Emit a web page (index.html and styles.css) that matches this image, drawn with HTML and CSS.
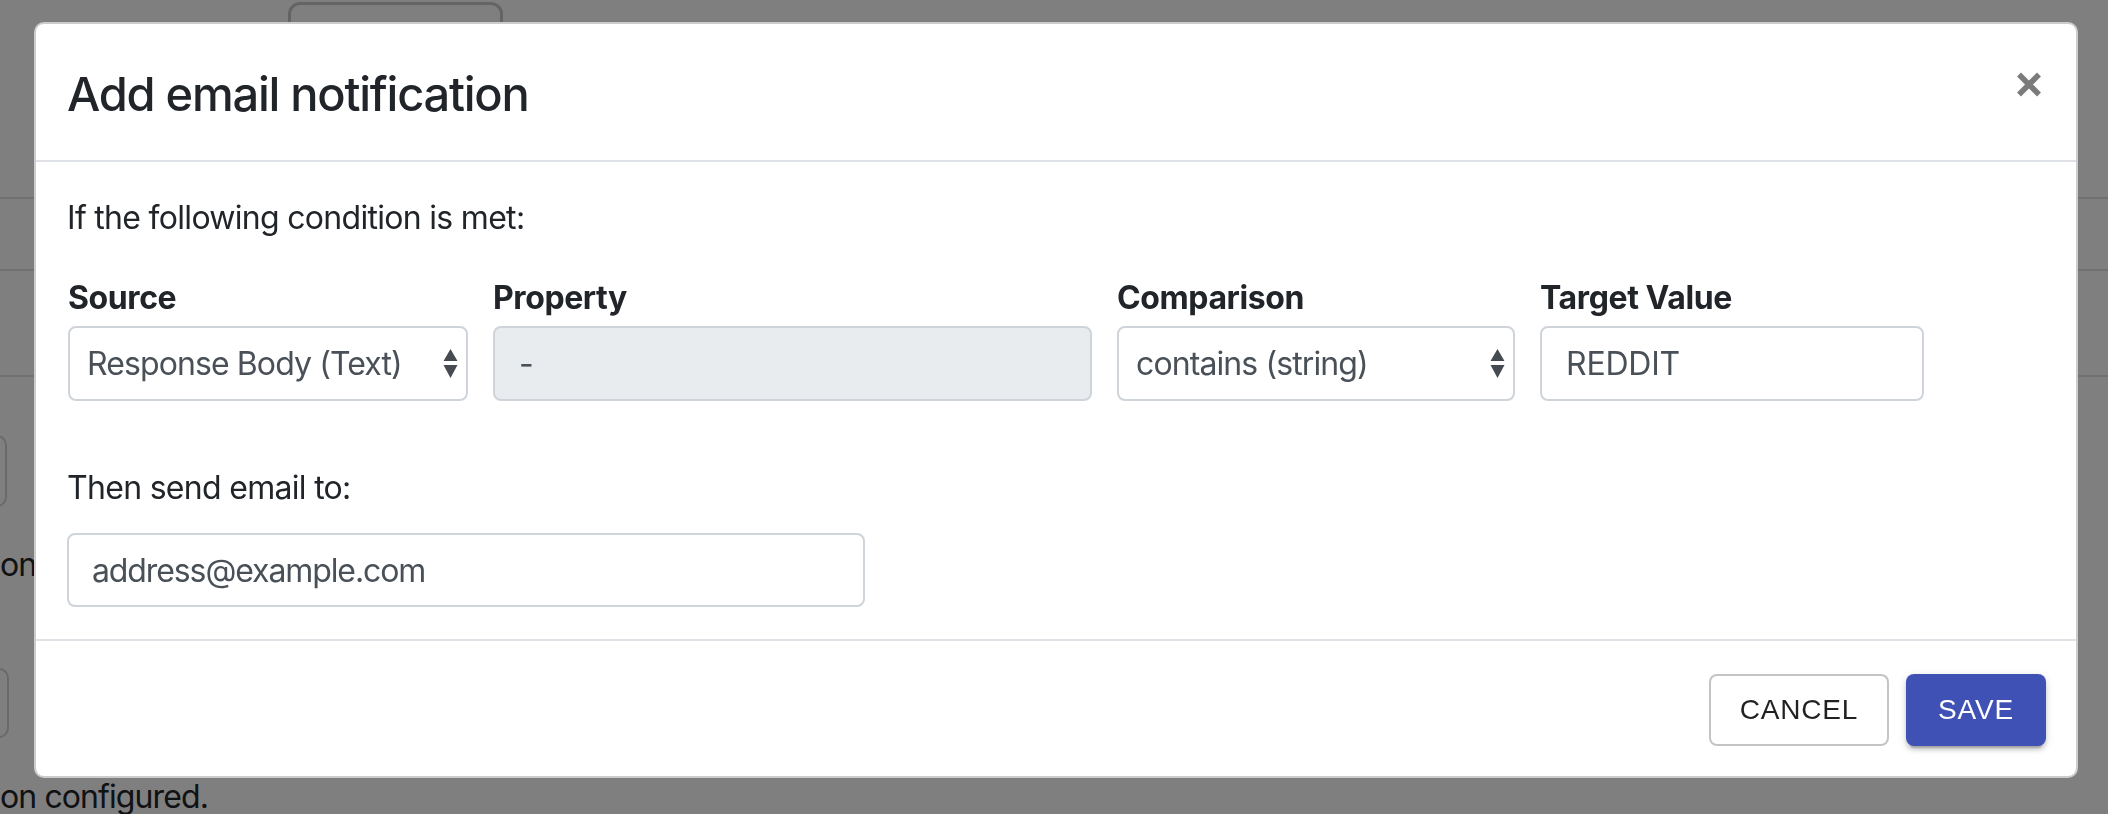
FILE: index.html
```html
<!DOCTYPE html>
<html>
<head>
<meta charset="utf-8">
<title>Add email notification</title>
<link rel="stylesheet" href="styles.css">
</head>
<body>
<div class="page">
  <div class="bg-btn"></div>
  <div class="bg-line first"></div>
  <div class="bg-line second"></div>
  <div class="bg-line third"></div>
  <div class="bg-box one"></div>
  <div class="bg-text on">on</div>
  <div class="bg-box two"></div>
  <div class="bg-text configured">on configured.</div>
</div>
<div class="backdrop"></div>
<div class="modal">
  <div class="modal-header">
    <h4 class="modal-title">Add email notification</h4>
    <button class="close" type="button" aria-label="Close">
      <svg width="26" height="25" viewBox="0 0 26 25"><path d="M3 2.5 L23 22.5 M23 2.5 L3 22.5" stroke="#7b7b7b" stroke-width="5.5" stroke-linecap="butt"/></svg>
    </button>
  </div>
  <div class="modal-body">
    <p class="intro">If the following condition is met:</p>
    <div class="cond-grid">
      <div class="field">
        <label class="lbl">Source</label>
        <div class="ctrl select"><span>Response Body (Text)</span>
          <svg class="arrows" width="15" height="30" viewBox="0 0 15 30"><path d="M7.5 0 L14.5 12 L0.5 12 Z M0.5 16 L14.5 16 L7.5 29 Z" fill="#454b51"/></svg>
        </div>
      </div>
      <div class="field">
        <label class="lbl">Property</label>
        <div class="ctrl input disabled"><span>-</span></div>
      </div>
      <div class="field">
        <label class="lbl">Comparison</label>
        <div class="ctrl select"><span>contains (string)</span>
          <svg class="arrows" width="15" height="30" viewBox="0 0 15 30"><path d="M7.5 0 L14.5 12 L0.5 12 Z M0.5 16 L14.5 16 L7.5 29 Z" fill="#454b51"/></svg>
        </div>
      </div>
      <div class="field">
        <label class="lbl">Target Value</label>
        <div class="ctrl input target"><span>REDDIT</span></div>
      </div>
    </div>
    <p class="then">Then send email to:</p>
    <div class="ctrl input email"><span>address@example.com</span></div>
  </div>
  <div class="modal-footer">
    <button class="btn cancel" type="button">Cancel</button>
    <button class="btn save" type="button">Save</button>
  </div>
</div>
</body>
</html>
```
FILE: styles.css
```css
* { box-sizing: border-box; }
html, body { margin: 0; padding: 0; }
body {
  width: 2108px;
  height: 814px;
  overflow: hidden;
  background: #ffffff;
  font-family: "Inter", "Liberation Sans", sans-serif;
  color: #212529;
  font-size: 32px;
}

/* background page (under the backdrop) */
.page { display: flex; flex-direction: column; padding-top: 2px; }
.bg-btn {
  margin-left: 288px;
  width: 215px;
  height: 70px;
  border: 3px solid #c6c8ca;
  border-radius: 12px;
}
.bg-line { height: 2px; background: #dee2e6; }
.bg-line.first { margin-top: 125px; }
.bg-line.second { margin-top: 70px; }
.bg-line.third { margin-top: 104px; }
.bg-box {
  margin-left: -200px;
  border: 2px solid #ced4da;
  border-radius: 10px;
}
.bg-box.one { margin-top: 58px; width: 207px; height: 72px; }
.bg-box.two { margin-top: 79px; width: 209px; height: 70px; }
.bg-text { line-height: 48px; letter-spacing: -0.9px; }
.bg-text.on { margin-top: 34px; }
.bg-text.configured { margin-top: 35px; }

.backdrop {
  position: fixed;
  inset: 0;
  background: rgba(0, 0, 0, 0.5);
}

/* modal */
.modal {
  position: fixed;
  top: 22px;
  left: 34px;
  width: 2044px;
  background: #fff;
  border: 2px solid rgba(0, 0, 0, 0.2);
  border-radius: 10px;
  display: flex;
  flex-direction: column;
}
.modal-header {
  display: flex;
  align-items: flex-start;
  justify-content: space-between;
  padding: 34px 32px 30px 31px;
  border-bottom: 2px solid #dee2e6;
}
.modal-title {
  margin: 0;
  font-size: 47px;
  font-weight: 500;
  line-height: 72px;
  letter-spacing: -1.25px;
  color: #212529;
}
.close {
  margin: 14px 2px 0 0;
  padding: 0;
  border: 0;
  background: transparent;
  width: 26px;
  height: 25px;
  display: flex;
}

.modal-body {
  padding: 32px;
  display: flex;
  flex-direction: column;
  align-items: flex-start;
}
.intro, .then {
  margin: 0;
  line-height: 48px;
  letter-spacing: -0.7px;
}
.intro { margin-bottom: 32px; margin-left: -1px; }
.then { margin-top: 63px; margin-bottom: 21px; margin-left: -1px; }

.cond-grid {
  display: grid;
  grid-template-columns: 400px 599px 398px 384px;
  column-gap: 25px;
}
.field { display: flex; flex-direction: column; }
.lbl {
  font-weight: 700;
  line-height: 48px;
  margin-bottom: 4px;
  letter-spacing: -0.4px;
}
.ctrl {
  height: 75px;
  border: 2px solid #ced4da;
  border-radius: 8px;
  display: flex;
  align-items: center;
  color: #495057;
  letter-spacing: -0.9px;
  background: #fff;
}
.ctrl.input { padding: 0 24px; }
.ctrl.select { padding: 0 8px 0 17px; justify-content: space-between; }
.ctrl.disabled { background: #e9ecef; }
.ctrl.target { letter-spacing: -0.2px; }
.ctrl.email { width: 798px; height: 74px; margin-left: -1px; padding-left: 23px; letter-spacing: -1.1px; }
.arrows { flex: none; }

.modal-footer {
  display: flex;
  justify-content: flex-end;
  gap: 17px;
  padding: 33px 30px 30px;
  border-top: 2px solid #dee2e6;
}
.btn {
  height: 72px;
  border-radius: 8px;
  font-family: "Liberation Sans", Arial, sans-serif;
  font-size: 28px;
  font-weight: 400;
  letter-spacing: 0.8px;
  text-transform: uppercase;
  display: flex;
  align-items: center;
  justify-content: center;
  padding: 0;
  cursor: pointer;
}
.btn.cancel {
  width: 180px;
  background: #fff;
  color: rgba(0, 0, 0, 0.87);
  border: 2px solid rgba(0, 0, 0, 0.23);
}
.btn.save {
  width: 140px;
  background: #3f51b5;
  color: #fff;
  border: 0;
  box-shadow: 0 6px 2px -4px rgba(0,0,0,0.2), 0 4px 4px 0 rgba(0,0,0,0.14), 0 2px 10px 0 rgba(0,0,0,0.12);
}
```
